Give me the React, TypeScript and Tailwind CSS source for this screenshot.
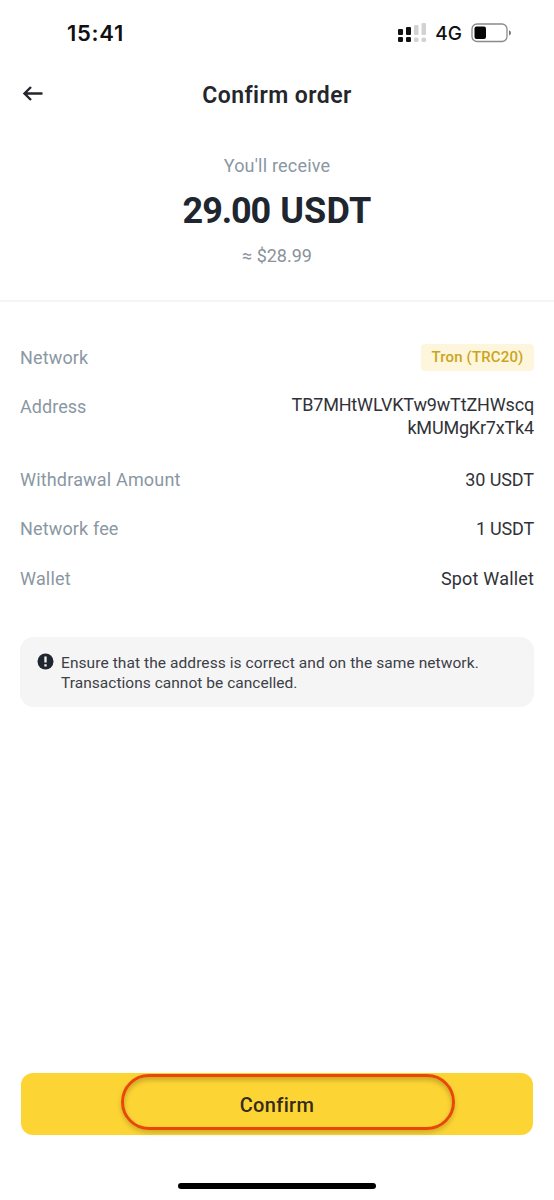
import type { ReactNode } from "react";

function StatusBar() {
  return (
    <div className="flex h-[66px] items-center justify-between pr-[41px] pl-[67px] text-[#111]">
      <span className="font-['Inter'] text-[22px] leading-none font-semibold tracking-[0.7px]">15:41</span>
      <div className="flex items-center">
        <svg width="30" height="20" viewBox="0 0 30 20" fill="#111">
          <rect x="1" y="6" width="5" height="6" rx="1" />
          <rect x="9" y="4" width="5" height="8" rx="1" />
          <rect x="1" y="14" width="5" height="5" rx="1.2" />
          <rect x="9" y="14" width="5" height="5" rx="1.2" />
          <g fill="#d2d2d2">
            <rect x="17" y="2" width="4.5" height="10" rx="1" />
            <rect x="24.5" y="0" width="4.5" height="12" rx="1" />
            <rect x="17" y="14.5" width="4.5" height="4.5" rx="1.5" />
            <rect x="24.5" y="14.5" width="4.5" height="4.5" rx="1.5" />
          </g>
        </svg>
        <span className="ml-[8px] font-['Inter'] text-[19px] leading-none font-medium">4G</span>
        <svg className="ml-[9px]" width="42" height="20" viewBox="0 0 42 20">
          <rect x="1" y="1" width="35" height="17.5" rx="5" fill="white" stroke="#8a8a8a" strokeWidth="1.3" />
          <rect x="3.5" y="3.5" width="11.5" height="12.5" rx="2" fill="#050505" />
          <path d="M38 7.2c2.6.8 2.6 4.4 0 5.2z" fill="#777" />
        </svg>
      </div>
    </div>
  );
}

function Row({ label, className, children }: { label: string; className: string; children: ReactNode }) {
  return (
    <div className="flex justify-between text-lg leading-[23px] text-[#303238]">
      <span className={`text-[#8a97a3] ${className}`}>{label}</span>
      {children}
    </div>
  );
}

export default function App() {
  return (
    <main className="flex h-[1200px] w-[554px] flex-col bg-white font-['Roboto',sans-serif]">
      <StatusBar />
      <header className="grid h-[56px] grid-cols-[1fr_auto_1fr] items-center px-[22px] text-[#24262b]">
        <svg width="22" height="18" viewBox="0 0 22 18" fill="none" stroke="#24262b" strokeWidth="2.4">
          <path d="M20.5 8.5H2.5M9 2 2.5 8.5 9 15" />
        </svg>
        <h1 className="pt-[2px] text-[23px] leading-none font-semibold tracking-[0.45px]">Confirm order</h1>
      </header>

      <section className="flex h-[180px] flex-col items-center border-b-2 border-[#f5f5f6] pt-[32px]">
        <p className="text-lg leading-[23px] tracking-[0.2px] text-[#8a97a3]">You&apos;ll receive</p>
        <p className="mt-[12px] flex gap-[10px] text-[36px] leading-[44px] font-bold text-[#202630]">
          <span className="tracking-[-1.1px]">29.00</span>{" "}
          <span className="tracking-[0.2px]">USDT</span>
        </p>
        <p className="mt-[11px] text-lg leading-[23px] text-[#8a929b]">≈ $28.99</p>
      </section>

      <section className="flex flex-col gap-[26.4px] px-5 pt-[44px]">
        <Row label="Network" className="tracking-[0.15px]">
          <span className="-my-[2px] flex h-[27px] w-[113px] items-center justify-center rounded bg-[#fef6dc] text-[15px] font-medium tracking-[0.15px] text-[#caa51a]">
            Tron (TRC20)
          </span>
        </Row>
        <Row label="Address" className="tracking-[0.05px]">
          <span className="-mt-[2px] mb-[2px] flex flex-col items-end">
            <span className="tracking-[-0.16px]">TB7MHtWLVKTw9wTtZHWscq</span>
            <span className="tracking-[-0.18px]">kMUMgKr7xTk4</span>
          </span>
        </Row>
        <Row label="Withdrawal Amount" className="tracking-[0.18px]"><span className="tracking-[-0.1px]">30 USDT</span></Row>
        <Row label="Network fee" className="tracking-[0.15px]"><span className="tracking-[-0.2px]">1 USDT</span></Row>
        <Row label="Wallet" className="tracking-[0.2px]"><span className="-mr-[0.2px] tracking-[0.2px]">Spot Wallet</span></Row>
      </section>

      <section className="mx-5 mt-[47.4px] flex h-[70px] gap-[7px] rounded-[14px] bg-[#f5f5f5] pt-[16px] pl-[17px]">
        <svg width="17" height="17" viewBox="0 0 17 17">
          <circle cx="8.5" cy="8.5" r="8" fill="#202630" />
          <path d="M8.5 3.5v6M8.5 11.3v2.2" stroke="#f5f5f5" strokeWidth="2.3" />
        </svg>
        <div className="text-[15.5px] leading-[20px] text-[#3c4047]">
          <p className="tracking-[0.08px]">Ensure that the address is correct and on the same network.</p>
          <p className="tracking-[0.03px]">Transactions cannot be cancelled.</p>
        </div>
      </section>

      <footer className="mt-auto flex flex-col items-center pb-[11px]">
        <button className="relative h-[62px] w-[512px] rounded-xl bg-[#fcd535] pt-[2px] text-xl font-medium tracking-[0.35px] text-[#352b1a]">
          Confirm
          <span className="absolute top-[1px] left-[100px] h-[56px] w-[334px] rounded-full border-[3px] border-[#e84708] shadow-[0_3px_5px_#80601055,inset_0_3px_5px_#80601066]" />
        </button>
        <div className="mt-[48px] h-[6px] w-[198px] rounded-full bg-black" />
      </footer>
    </main>
  );
}
